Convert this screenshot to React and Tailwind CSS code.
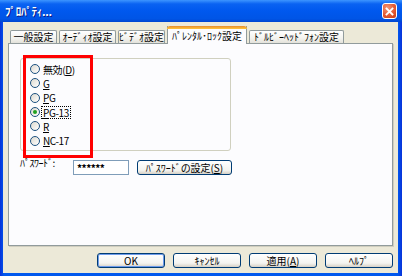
import React from "react";

const F = "font-['Noto_Sans_CJK_JP',sans-serif] [font-feature-settings:'palt']";

function Tab({ label, w, selected }) {
  if (selected) {
    return (
      <div
        className={`relative z-10 -mb-px h-[18px] ${w} border-x border-[#919B9C] bg-[#FCFCFE] flex flex-col`}
      >
        <div className="h-[3px] -mx-px rounded-t-[3px] bg-[linear-gradient(#E68B2C,#FFC73C)]" />
        <div className="flex-1 flex items-center justify-center text-[10px] leading-none text-black pb-[2px]">
          {label}
        </div>
      </div>
    );
  }
  return (
    <div
      className={`h-[13px] ${w} rounded-t-[2px] border border-b-0 border-[#919B9C] bg-[linear-gradient(#FFFFFF,#F3F3EF_60%,#E3E2DA)] flex items-center justify-center text-[10px] leading-none text-black`}
    >
      {label}
    </div>
  );
}

function Radio({ checked, children, focused }) {
  return (
    <div className="h-[14.3px] flex items-center">
      <div className="w-[10px] h-[10px] rounded-full border border-[#1C5180] bg-[linear-gradient(135deg,#DCD9CF,#FFFFFF)] flex items-center justify-center">
        {checked && <div className="w-[4px] h-[4px] rounded-full bg-[#21A121]" />}
      </div>
      <div
        className={`ml-[2px] px-px text-[10px] leading-[11px] text-black tracking-[-0.4px] ${
          focused ? "outline outline-1 outline-dotted outline-black" : ""
        }`}
      >
        {children}
      </div>
    </div>
  );
}

function Btn({ children, def, w = "w-[68px]" }) {
  return (
    <div
      className={`h-[15px] ${w} rounded-[3px] border border-[#003C74] bg-[linear-gradient(#FFFFFF,#F4F4F0_70%,#D6D0C5)] flex items-center justify-center text-[10px] leading-none text-black ${
        def ? "shadow-[inset_0_0_0_1px_#6D9BEA]" : ""
      }`}
    >
      {children}
    </div>
  );
}

export default function App() {
  return (
    <div
      className={`w-[402px] h-[276px] bg-[linear-gradient(90deg,#0831D9,#0058EE_1%,#0058EE_99%,#0831D9)] flex flex-col ${F}`}
    >
      {/* title bar */}
      <div className="h-[22px] bg-[linear-gradient(#3D95FF,#0A62F2_18%,#0058EE_50%,#0055E6_85%,#0046D0)] flex items-center pl-[5px] pr-[5px]">
        <div className="text-[11px] font-bold text-white leading-none tracking-[-0.3px] [text-shadow:1px_1px_0_#0A1883]">
          ﾌﾟﾛﾊﾟﾃｨ...
        </div>
        <div className="ml-auto w-[15px] h-[16px] rounded-[3px] border border-white bg-[radial-gradient(circle_at_35%_30%,#F39677,#E35A33_55%,#C33A14)] flex items-center justify-center">
          <svg width="9" height="9" viewBox="0 0 9 9">
            <path d="M1.5 1.5 L7.5 7.5 M7.5 1.5 L1.5 7.5" stroke="white" strokeWidth="1.8" strokeLinecap="square" />
          </svg>
        </div>
      </div>

      {/* body */}
      <div className="flex-1 ml-[3px] mr-[4px] mb-[3px] bg-[#ECE9D8] flex flex-col pt-[4px] px-[5px]">
        {/* tabs */}
        <div className="flex items-end gap-[2px] pl-[2px] h-[17px]">
          <Tab label="一般設定" w="w-[47px]" />
          <Tab label="ｵｰﾃﾞｨｵ設定" w="w-[57px]" />
          <Tab label="ﾋﾞﾃﾞｵ設定" w="w-[47px]" />
          <Tab label="ﾊﾟﾚﾝﾀﾙ･ﾛｯｸ設定" w="w-[80px]" selected />
          <Tab label="ﾄﾞﾙﾋﾞｰﾍｯﾄﾞﾌｫﾝ設定" w="w-[95px]" />
        </div>

        {/* panel */}
        <div className="relative h-[203px] border border-[#919B9C] bg-[#FCFCFE] pl-[11px] pt-[14px] shadow-[1px_1px_0_#D0CEBF]">
          <div className="w-[211px] h-[93px] rounded-[3px] border border-[#D0D0BF] pl-[9px] pt-[3px]">
            <Radio>
              無効(<span className="underline">D</span>)
            </Radio>
            <Radio>
              <span className="underline">G</span>
            </Radio>
            <Radio>
              <span className="underline">P</span>G
            </Radio>
            <Radio checked focused>
              <span className="underline">P</span>G-13
            </Radio>
            <Radio>
              <span className="underline">R</span>
            </Radio>
            <Radio>
              <span className="underline">N</span>C-17
            </Radio>
          </div>

          <div className="flex items-start mt-[9px]">
            <div className="mt-[-2px] w-[53px] text-[10px] leading-none text-black tracking-[-0.5px]">
              ﾊﾟｽﾜｰﾄﾞ:
            </div>
            <div className="w-[56px] h-[15px] border border-[#7F9DB9] bg-white flex items-center pl-[3px] text-[10px] font-bold leading-none text-black tracking-[-0.5px]">
              ******
            </div>
            <div className="ml-[8px]">
              <Btn w="w-[95px]">
                ﾊﾟｽﾜｰﾄﾞの設定(<span className="underline">S</span>)
              </Btn>
            </div>
          </div>

          {/* red annotation box */}
          <div className="absolute left-[14px] top-[11px] w-[70px] h-[103px] border-[3px] border-[#FF0000]" />
        </div>

        {/* buttons */}
        <div className="flex justify-end gap-[8px] mt-[7px]">
          <Btn def>OK</Btn>
          <Btn>ｷｬﾝｾﾙ</Btn>
          <Btn>
            適用(<span className="underline">A</span>)
          </Btn>
          <Btn>ﾍﾙﾌﾟ</Btn>
        </div>
      </div>
    </div>
  );
}
